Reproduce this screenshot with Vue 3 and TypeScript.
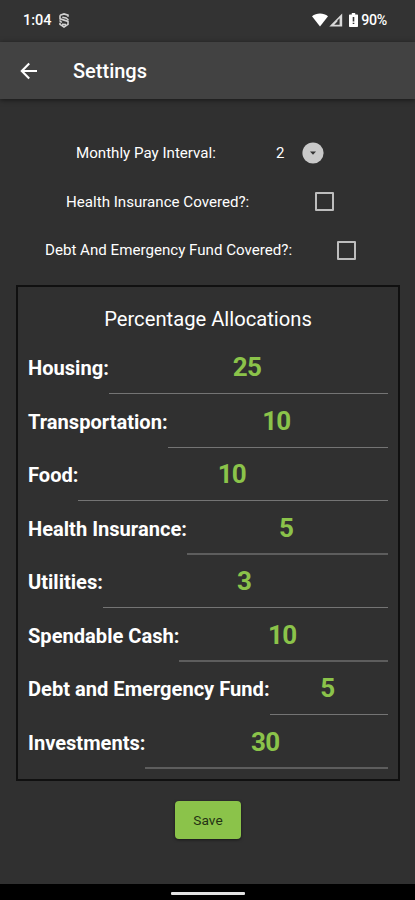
<script setup lang="ts">
import { ref } from 'vue'

interface Allocation {
  label: string
  value: number
  thick?: boolean
}

const interval = ref(2)
const healthCovered = ref(false)
const debtCovered = ref(false)
const allocations = ref<Allocation[]>([
  { label: 'Housing:', value: 25 },
  { label: 'Transportation:', value: 10 },
  { label: 'Food:', value: 10 },
  { label: 'Health Insurance:', value: 5, thick: true },
  { label: 'Utilities:', value: 3 },
  { label: 'Spendable Cash:', value: 10, thick: true },
  { label: 'Debt and Emergency Fund:', value: 5 },
  { label: 'Investments:', value: 30, thick: true },
])
</script>

<template>
  <div class="screen">
    <div class="status">
      <span class="time">1:04</span>
      <svg class="vpn" width="12" height="15" viewBox="0 0 12 15" fill="none" stroke="#d2d2d2" stroke-width="1.6">
        <path d="M2 2.2 6 .9l4 1.3v1.6M2 2.2v3.6l8 2.6v3L6 14l-4-2.6V9.8M1.5 7.5l2.3 2M10.5 7 8 5 4.3 4.2M4 11.2l4 .3" />
      </svg>
      <div class="indicators">
        <svg class="wifi" width="16" height="14" viewBox="0 0 16 14" fill="#fff">
          <path d="M0 3.3C4.4-.4 11.6-.4 16 3.3L8 13.5Z" />
        </svg>
        <svg class="signal" width="14" height="14" viewBox="0 0 14 14">
          <path d="M13.2.5v13H.3Z" fill="#d8d8d8" />
          <path d="M10.6 5.2v6.6H5.2l3.2-3.3V7.4Z" fill="#343434" />
        </svg>
        <svg class="battery" width="9" height="14" viewBox="0 0 9 14">
          <path d="M2.8 0h3.4v1.5H8.3a.7.7 0 0 1 .7.7v11a.8.8 0 0 1-.8.8H.8a.8.8 0 0 1-.8-.8v-11a.7.7 0 0 1 .7-.7h2.1Z" fill="#fff" />
          <path d="M3.7 4h1.6v4.4H3.7ZM3.7 9.7h1.6v1.4H3.7Z" fill="#333" />
        </svg>
        <span class="percent">90%</span>
      </div>
    </div>

    <header class="bar">
      <svg class="back" width="18" height="18" viewBox="0 0 18 18" fill="none" stroke="#fff" stroke-width="2.1">
        <path d="M17 9H2.2M9.2 1.6 1.8 9l7.4 7.4" />
      </svg>
      <h1>Settings</h1>
    </header>

    <main>
      <div class="option interval">
        <span class="caption">Monthly Pay Interval:</span>
        <span class="choice">{{ interval }}</span>
        <svg width="22" height="22" viewBox="0 0 22 22">
          <circle cx="11" cy="11" r="10.6" fill="#c9c9c9" />
          <path d="M8 9.4h6l-3 3.4Z" fill="#333" />
        </svg>
      </div>
      <label class="option health">
        <span class="caption">Health Insurance Covered?:</span>
        <input v-model="healthCovered" type="checkbox">
      </label>
      <label class="option debt">
        <span class="caption">Debt And Emergency Fund Covered?:</span>
        <input v-model="debtCovered" type="checkbox">
      </label>

      <section class="panel">
        <h2>Percentage Allocations</h2>
        <div v-for="item in allocations" :key="item.label" class="row">
          <span class="name">{{ item.label }}</span>
          <span class="value" :class="{ thick: item.thick }">{{ item.value }}</span>
        </div>
      </section>

      <button class="save" type="button">Save</button>
    </main>

    <footer><span class="handle"></span></footer>
  </div>
</template>

<style>
body {
  margin: 0;
  background: #303030;
}
</style>

<style scoped>
.screen {
  width: 415px;
  height: 900px;
  display: flex;
  flex-direction: column;
  overflow: hidden;
  background: #303030;
  color: #fff;
  font-family: Roboto, sans-serif;
}
.status {
  height: 42px;
  box-sizing: border-box;
  flex: none;
  display: flex;
  align-items: center;
  padding: 0 28px 2px 23px;
  background: #333;
}
.time {
  width: 35px;
  font-size: 14.5px;
  font-weight: 500;
}
.indicators {
  margin-left: auto;
  display: flex;
  align-items: center;
}
.signal {
  margin-left: 1px;
}
.battery {
  margin-left: 6px;
}
.percent {
  margin-left: 3px;
  font-size: 14.2px;
  font-weight: 500;
  letter-spacing: -0.3px;
}
.bar {
  height: 57px;
  flex: none;
  display: flex;
  align-items: center;
  padding-left: 20px;
  background: #424242;
  box-shadow: 0 1px 5px rgba(0, 0, 0, 0.55);
}
h1 {
  margin: 0 0 0 35px;
  font-size: 20px;
  font-weight: 500;
}
main {
  flex: 1;
  display: flex;
  flex-direction: column;
  padding: 30px 15px 0 16px;
}
.option {
  height: 48.5px;
  flex: none;
  display: flex;
  align-items: center;
}
.caption {
  font-size: 15.12px;
  white-space: nowrap;
}
.interval {
  padding-left: 60px;
}
.interval .caption {
  width: 200px;
}
.choice {
  width: 26px;
  font-size: 15px;
}
.health {
  padding-left: 50px;
}
.health .caption {
  width: 249px;
}
.debt {
  padding-left: 29px;
}
.debt .caption {
  width: 292px;
}
input {
  appearance: none;
  width: 19px;
  height: 19px;
  margin: 0;
  border: 2px solid #bdbdbd;
  border-radius: 1px;
}
.panel {
  height: 496px;
  flex: none;
  box-sizing: border-box;
  margin-top: 10.5px;
  padding: 0 10px;
  border: 2px solid #101010;
}
h2 {
  height: 53.6px;
  margin: 0;
  padding-top: 11px;
  box-sizing: border-box;
  text-align: center;
  font-size: 20.2px;
  line-height: 42px;
  font-weight: 400;
}
.row {
  height: 53.5px;
  display: flex;
}
.name {
  padding-top: 15.5px;
  font-size: 20.1px;
  line-height: 24px;
  font-weight: 700;
  white-space: nowrap;
}
.value {
  flex: 1;
  padding: 11.5px 3px 0 0;
  border-bottom: 1px solid #747474;
  text-align: center;
  font-size: 26px;
  line-height: 30px;
  font-weight: 700;
  letter-spacing: -0.8px;
  color: #8bc34a;
}
.value.thick {
  border-bottom: 2px solid #5d5d5d;
}
.save {
  width: 66px;
  height: 38px;
  margin: 20px 0 0 159px;
  padding: 0;
  border: 0;
  border-radius: 4px;
  background: #8bc34a;
  box-shadow: 0 1px 3px rgba(0, 0, 0, 0.5);
  color: #243214;
  font: 400 13.7px Roboto, sans-serif;
  letter-spacing: 0.1px;
}
footer {
  height: 16px;
  flex: none;
  display: flex;
  justify-content: center;
  align-items: center;
  background: #000;
}
.handle {
  width: 74px;
  height: 3px;
  margin-top: 2px;
  border-radius: 1px;
  background: #e2e2e2;
}
</style>
